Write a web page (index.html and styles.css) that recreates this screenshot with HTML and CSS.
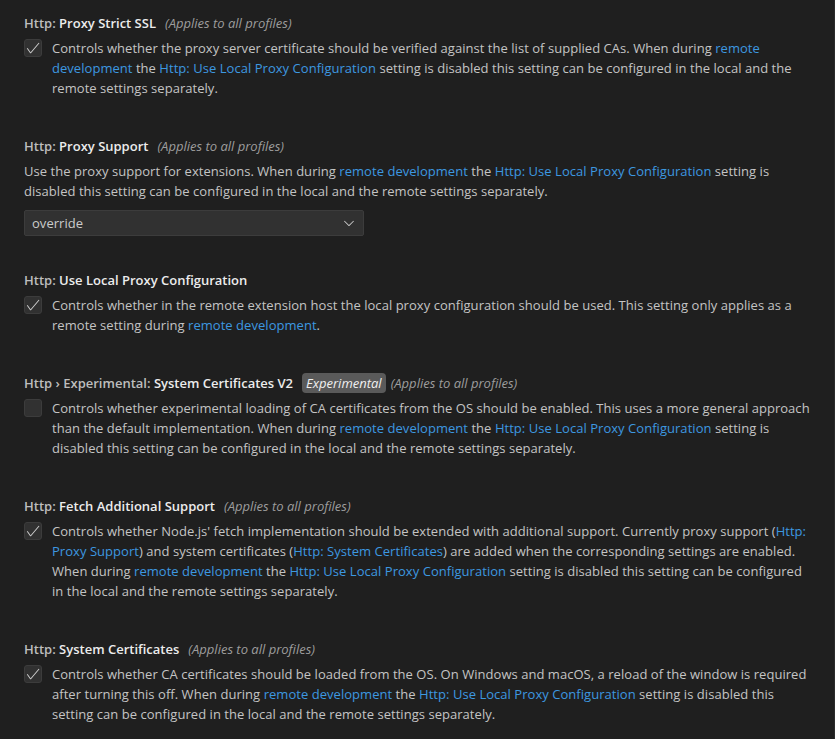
FILE: index.html
```html
<!DOCTYPE html>
<html lang="en">
<head>
<meta charset="utf-8">
<title>Settings</title>
<link rel="stylesheet" href="styles.css">
</head>
<body>
<div class="settings">

  <div class="setting">
    <div class="title"><span class="cat">Http: </span><span class="label">Proxy Strict SSL</span><span class="scope">(Applies to all profiles)</span></div>
    <div class="bool-row">
      <span class="checkbox checked"><svg viewBox="0 0 16 16" width="16" height="16"><path d="M14.431 3.323l-8.47 10-.79-.036-3.35-4.77.818-.574 2.978 4.24 8.051-9.506.764.646z"/></svg></span>
      <div class="desc">Controls whether the proxy server certificate should be verified against the list of supplied CAs. When during <a class="link">remote development</a> the <a class="link">Http: Use Local Proxy Configuration</a> setting is disabled this setting can be configured in the local and the remote settings separately.</div>
    </div>
  </div>

  <div class="setting has-select">
    <div class="title"><span class="cat">Http: </span><span class="label">Proxy Support</span><span class="scope">(Applies to all profiles)</span></div>
    <div class="desc">Use the proxy support for extensions. When during <a class="link">remote development</a> the <a class="link">Http: Use Local Proxy Configuration</a> setting is disabled this setting can be configured in the local and the remote settings separately.</div>
    <div class="select"><span>override</span><svg viewBox="0 0 16 16" width="16" height="16"><path d="M7.976 10.072l4.357-4.357.62.618L8.284 11h-.618L3 6.333l.619-.618 4.357 4.357z"/></svg></div>
  </div>

  <div class="setting">
    <div class="title"><span class="cat">Http: </span><span class="label">Use Local Proxy Configuration</span></div>
    <div class="bool-row">
      <span class="checkbox checked"><svg viewBox="0 0 16 16" width="16" height="16"><path d="M14.431 3.323l-8.47 10-.79-.036-3.35-4.77.818-.574 2.978 4.24 8.051-9.506.764.646z"/></svg></span>
      <div class="desc">Controls whether in the remote extension host the local proxy configuration should be used. This setting only applies as a remote setting during <a class="link">remote development</a>.</div>
    </div>
  </div>

  <div class="setting">
    <div class="title"><span class="cat">Http › Experimental: </span><span class="label">System Certificates V2</span><span class="badge">Experimental</span><span class="scope tight">(Applies to all profiles)</span></div>
    <div class="bool-row">
      <span class="checkbox"></span>
      <div class="desc">Controls whether experimental loading of CA certificates from the OS should be enabled. This uses a more general approach than the default implementation. When during <a class="link">remote development</a> the <a class="link">Http: Use Local Proxy Configuration</a> setting is disabled this setting can be configured in the local and the remote settings separately.</div>
    </div>
  </div>

  <div class="setting">
    <div class="title"><span class="cat">Http: </span><span class="label">Fetch Additional Support</span><span class="scope">(Applies to all profiles)</span></div>
    <div class="bool-row">
      <span class="checkbox checked"><svg viewBox="0 0 16 16" width="16" height="16"><path d="M14.431 3.323l-8.47 10-.79-.036-3.35-4.77.818-.574 2.978 4.24 8.051-9.506.764.646z"/></svg></span>
      <div class="desc">Controls whether Node.js' fetch implementation should be extended with additional support. Currently proxy support (<a class="link">Http: Proxy Support</a>) and system certificates (<a class="link">Http: System Certificates</a>) are added when the corresponding settings are enabled. When during <a class="link">remote development</a> the <a class="link">Http: Use Local Proxy Configuration</a> setting is disabled this setting can be configured in the local and the remote settings separately.</div>
    </div>
  </div>

  <div class="setting">
    <div class="title"><span class="cat">Http: </span><span class="label">System Certificates</span><span class="scope">(Applies to all profiles)</span></div>
    <div class="bool-row">
      <span class="checkbox checked"><svg viewBox="0 0 16 16" width="16" height="16"><path d="M14.431 3.323l-8.47 10-.79-.036-3.35-4.77.818-.574 2.978 4.24 8.051-9.506.764.646z"/></svg></span>
      <div class="desc">Controls whether CA certificates should be loaded from the OS. On Windows and macOS, a reload of the window is required after turning this off. When during <a class="link">remote development</a> the <a class="link">Http: Use Local Proxy Configuration</a> setting is disabled this setting can be configured in the local and the remote settings separately.</div>
    </div>
  </div>

</div>
</body>
</html>
```

FILE: styles.css
```css
html, body {
  margin: 0;
  padding: 0;
  background: #1f1f1f;
  height: 100%;
}

body {
  font-family: "Open Sans", "Noto Sans", sans-serif;
  font-size: 13px;
  letter-spacing: 0.04px;
  line-height: 20px;
  color: #c4c4c4;
  overflow: hidden;
}

.settings {
  min-height: 100%;
  box-sizing: border-box;
  padding: 1px 22px 0 24px;
  border-right: 1px solid #2b2b2b;
  width: 835px;
}

.setting {
  padding: 12px 0 26px;
}

.setting.has-select {
  padding-bottom: 22px;
}

.title {
  display: flex;
  align-items: center;
  height: 20px;
  white-space: pre;
  font-weight: 600;
  letter-spacing: 0;
}

.cat {
  color: #bdbdbd;
}

.label {
  color: #ececec;
}

.scope {
  font-weight: 400;
  font-style: italic;
  color: #9d9d9d;
  margin-left: 9px;
}

.scope.tight {
  margin-left: 5px;
}

.badge {
  font-weight: 400;
  font-style: italic;
  color: #f0f0f0;
  background: #5a5a5a;
  border-radius: 4px;
  padding: 0 4px;
  margin-left: 9px;
  height: 20px;
  line-height: 20px;
}

.bool-row {
  display: flex;
  align-items: flex-start;
  margin-top: 5px;
}

.desc {
  margin-top: 5px;
}

.bool-row .desc {
  margin-top: 0;
  flex: 1;
}

.checkbox {
  flex: none;
  width: 18px;
  height: 18px;
  box-sizing: border-box;
  margin: 1px 10px 0 0;
  background: #313131;
  border: 1px solid #3c3c3c;
  border-radius: 3px;
  display: flex;
  align-items: center;
  justify-content: center;
}

.checkbox svg {
  fill: #cccccc;
}

.link {
  color: #3d98e0;
  text-decoration: none;
}

.select {
  margin-top: 9px;
  width: 340px;
  height: 26px;
  box-sizing: border-box;
  background: #313131;
  border: 1px solid #3c3c3c;
  border-radius: 2px;
  display: flex;
  align-items: center;
  justify-content: space-between;
  padding: 0 6px 0 7px;
  color: #cccccc;
}

.select svg {
  fill: #cccccc;
}
```
